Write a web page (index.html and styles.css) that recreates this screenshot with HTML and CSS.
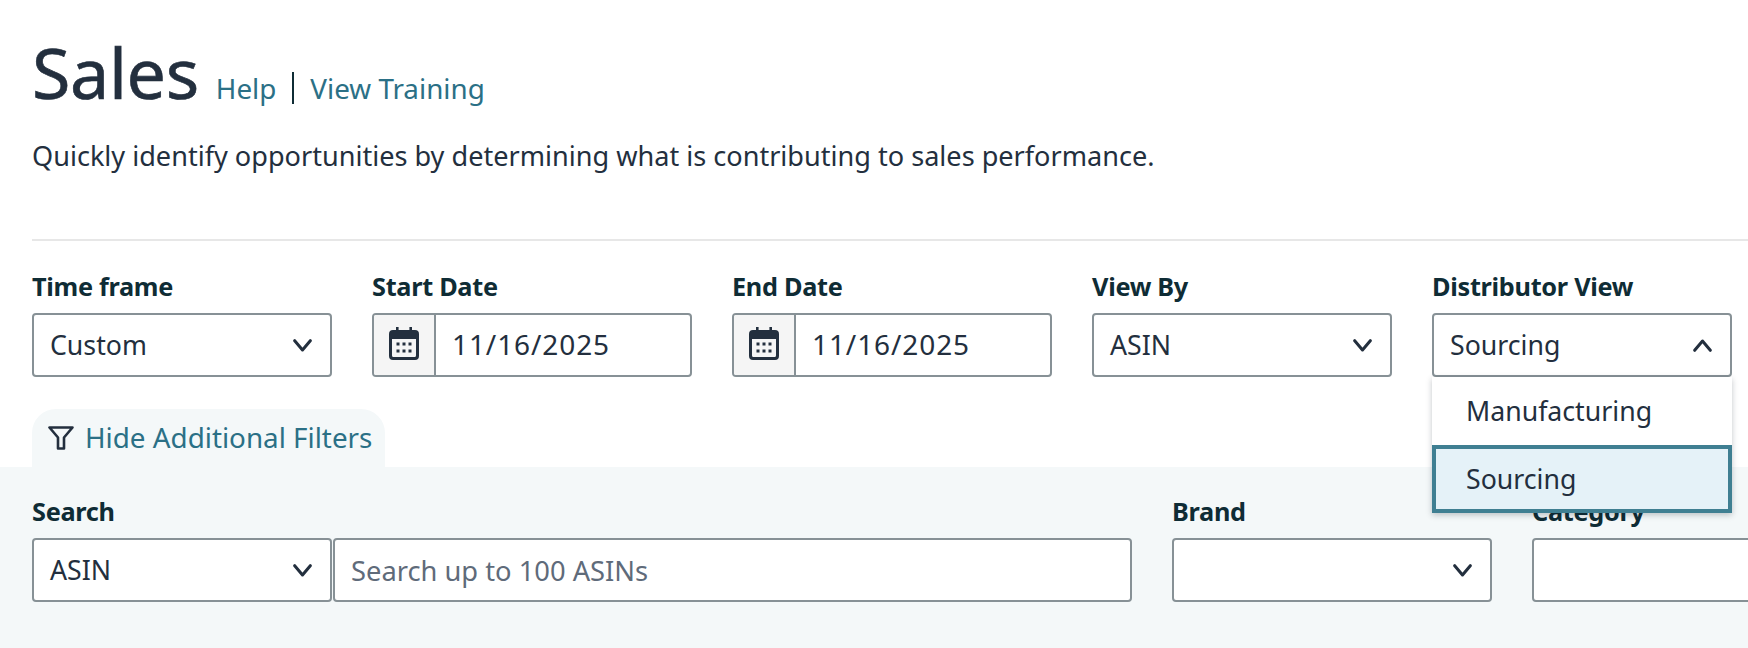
FILE: index.html
```html
<!DOCTYPE html>
<html lang="en">
<head>
<meta charset="utf-8">
<title>Sales</title>
<link rel="stylesheet" href="styles.css">
</head>
<body>
<svg class="defs" width="0" height="0" aria-hidden="true">
  <symbol id="chev" viewBox="0 0 19 13"><path d="M1.700 1.700 9.500 11l7.800-9.300" fill="none" stroke="currentColor" stroke-width="3" stroke-linecap="round" stroke-linejoin="round"/></symbol>
  <symbol id="cal" viewBox="0 0 30 33"><path fill-rule="evenodd" fill="currentColor" d="M7 0h2.600v3h10.800V0H23v3h3a4 4 0 0 1 4 4v22a4 4 0 0 1-4 4H4a4 4 0 0 1-4-4V7a4 4 0 0 1 4-4h3zM3 12v16.500A1.500 1.500 0 0 0 4.500 30h21a1.500 1.500 0 0 0 1.500-1.500V12z"/><path fill="currentColor" d="M7.500 15.500h3v3h-3zM13.500 15.500h3v3h-3zM19.500 15.500h3v3h-3zM7.500 22.500h3v3h-3zM13.500 22.500h3v3h-3zM19.500 22.500h3v3h-3z"/></symbol>
</svg>
<main class="page">
  <header class="head">
    <div class="title-row">
      <h1 class="title">Sales</h1>
      <a class="link first" href="#">Help</a>
      <a class="link second" href="#">View Training</a>
    </div>
    <p class="desc">Quickly identify opportunities by determining what is contributing to sales performance.</p>
  </header>
  <div class="controls">
    <div class="field w300">
      <span class="label">Time frame</span>
      <div class="box select"><span class="value">Custom</span><svg class="chev"><use href="#chev"/></svg></div>
    </div>
    <div class="field w320">
      <span class="label">Start Date</span>
      <div class="box date"><span class="addon"><svg class="cal"><use href="#cal"/></svg></span><span class="date-text">11/16/2025</span></div>
    </div>
    <div class="field w320">
      <span class="label">End Date</span>
      <div class="box date"><span class="addon"><svg class="cal"><use href="#cal"/></svg></span><span class="date-text">11/16/2025</span></div>
    </div>
    <div class="field w300">
      <span class="label">View By</span>
      <div class="box select"><span class="value">ASIN</span><svg class="chev"><use href="#chev"/></svg></div>
    </div>
    <div class="field w300 anchor">
      <span class="label">Distributor View</span>
      <div class="box select"><span class="value">Sourcing</span><svg class="chev up"><use href="#chev"/></svg></div>
      <ul class="menu">
        <li class="option">Manufacturing</li>
        <li class="option active">Sourcing</li>
      </ul>
    </div>
  </div>
  <div class="tab">
    <svg class="funnel" viewBox="0 0 26 24"><path d="M1.500 1.500h23L16 11.500v11h-6v-11z" fill="none" stroke="currentColor" stroke-width="2.600" stroke-linejoin="round"/></svg>
    <a class="tab-link" href="#">Hide Additional Filters</a>
  </div>
  <section class="panel">
    <div class="field search-field">
      <span class="label">Search</span>
      <div class="search-pair">
        <div class="box select w300"><span class="value">ASIN</span><svg class="chev"><use href="#chev"/></svg></div>
        <div class="box text"><span class="placeholder">Search up to 100 ASINs</span></div>
      </div>
    </div>
    <div class="field w320">
      <span class="label">Brand</span>
      <div class="box select"><svg class="chev"><use href="#chev"/></svg></div>
    </div>
    <div class="field w320">
      <span class="label">Category</span>
      <div class="box select"></div>
    </div>
  </section>
</main>
</body>
</html>
```
FILE: styles.css
```css
* { box-sizing: border-box; }
html, body { margin: 0; height: 100%; overflow: hidden; background: #fff; }
body { font-family: "Noto Sans", "Liberation Sans", sans-serif; color: #232f3e; font-size: 26.7px; }
.defs { position: absolute; }
.page { display: flex; flex-direction: column; height: 648px; }
.head { margin: 0 0 0 32px; padding-top: 32px; height: 241px; border-bottom: 2px solid #e7e7e7; }
.title-row { display: flex; align-items: baseline; height: 80px; }
.title { margin: 0; font-size: 70px; line-height: 80px; font-weight: 400; letter-spacing: -0.4px; -webkit-text-stroke: 0.6px #232f3e; }
.link { color: #2b7086; text-decoration: none; font-size: 27.8px; line-height: 32px; }
.first { margin-left: 17px; padding-right: 16px; }
.second { padding-left: 16px; border-left: 2px solid #0f2c35; }
.desc { margin: 26px 0 0; font-size: 27.1px; line-height: 36px; }
.controls { display: flex; gap: 40px; padding: 28px 0 0 32px; }
.field { display: flex; flex-direction: column; flex: none; }
.w300 { width: 300px; flex: none; }
.w320 { width: 320px; }
.anchor { position: relative; }
.label { font-size: 25.3px; line-height: 34px; margin-bottom: 10px; font-weight: 700; color: #0f2c35; letter-spacing: -0.3px; }
.box { height: 64px; border: 2px solid #879196; border-radius: 4px; background: #fff; display: flex; align-items: center; }
.select { justify-content: space-between; padding: 0 18px 0 16px; }
.value { margin-bottom: 2px; }
.chev { width: 19px; height: 13px; flex: none; margin-left: auto; color: #232f3e; }
.up { transform: scaleY(-1); }
.date { overflow: hidden; }
.addon { width: 62px; height: 100%; background: #f5f5f5; border-right: 2px solid #879196; display: flex; align-items: center; justify-content: center; flex: none; }
.cal { width: 30px; height: 33px; margin-bottom: 3px; color: #232f3e; }
.date-text { padding: 0 0 2px 16px; font-size: 28px; letter-spacing: 0.9px; }
.menu { position: absolute; left: 0; top: 108px; width: 300px; margin: 0; padding: 0; list-style: none; background: #fff; box-shadow: 0 2px 6px rgba(15, 27, 40, .25); z-index: 2; }
.option { height: 68px; padding: 0 0 2px 34px; display: flex; align-items: center; }
.active { background: #e5f2f8; border: 4px solid #3f7f92; padding: 0 0 2px 30px; }
.tab { align-self: flex-start; margin: 32px 0 0 32px; width: 353px; height: 58px; padding: 0 0 0 16px; background: #f4f8f9; border-radius: 24px 24px 0 0; display: flex; align-items: center; gap: 11px; }
.funnel { width: 26px; height: 24px; flex: none; color: #232f3e; }
.tab-link { color: #2b7086; text-decoration: none; font-size: 27.8px; margin-bottom: 2px; }
.panel { flex: 1; background: #f4f8f9; display: flex; gap: 40px; padding: 27px 0 0 32px; }
.search-field { width: 1100px; }
.search-pair { display: flex; gap: 1px; }
.text { flex: 1; padding-left: 16px; }
.placeholder { color: #5f6b7a; font-size: 27.3px; }
```
